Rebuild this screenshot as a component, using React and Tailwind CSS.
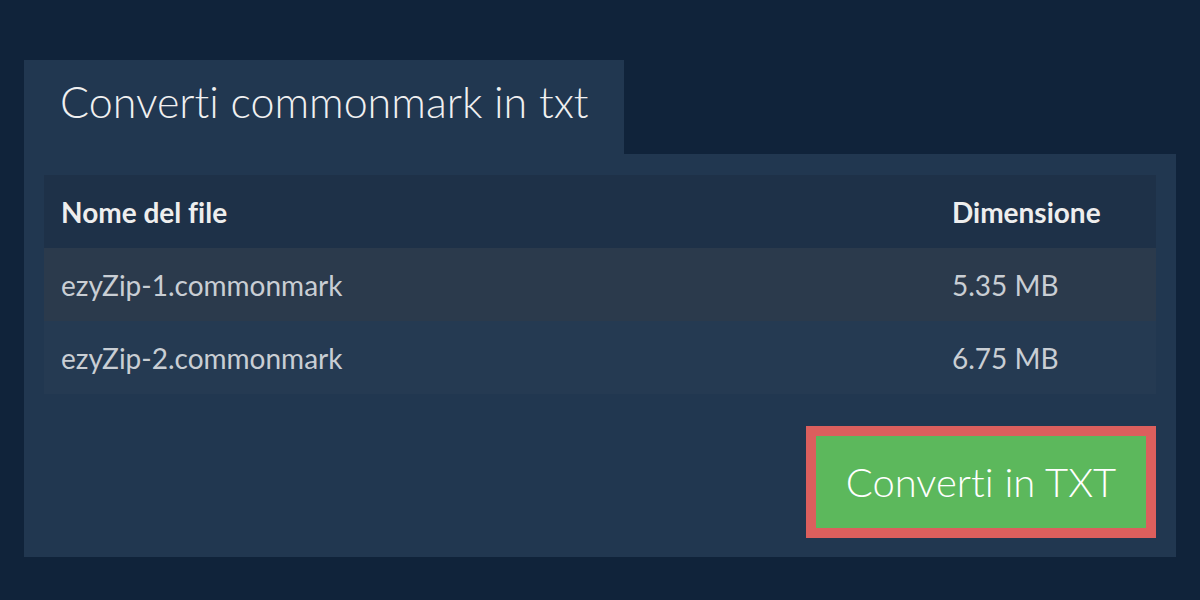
import React from 'react'

const files = [
  { name: 'ezyZip-1.commonmark', size: '5.35 MB' },
  { name: 'ezyZip-2.commonmark', size: '6.75 MB' },
]

const App = () => {
  return (
    <div className="w-[1200px] h-[600px] bg-[#10233a] pt-[60px] px-[24px] font-['Lato','Noto_Sans',sans-serif] [font-variant-ligatures:none]">
      <div className="w-[600px] h-[94px] bg-[#213750] pl-[36px] pt-[14px]">
        <h1 className="text-[43px] font-light text-[#f0f0f0] leading-[56px]">Converti commonmark in txt</h1>
      </div>
      <div className="bg-[#213750] px-[20px] pt-[21px] pb-[19px]">
        <div className="w-full">
          <div className="flex items-center h-[73px] bg-[#1e3148] text-[#eeeeee] text-[28px] font-bold">
            <div className="flex-1 pl-[17px]">Nome del file</div>
            <div className="w-[204px]">Dimensione</div>
          </div>
          {files.map((file, i) => (
            <div
              key={file.name}
              className={`flex items-center h-[73px] text-[28px] text-[#c9ced4] ${i === 0 ? 'bg-[#2b3a4c]' : 'bg-[#253a52]'}`}
            >
              <div className="flex-1 pl-[17px]">{file.name}</div>
              <div className="w-[204px]">{file.size}</div>
            </div>
          ))}
        </div>
        <div className="flex justify-end mt-[32px]">
          <button className="w-[350px] h-[112px] border-[10px] border-[#dc5f5d] bg-[#5cb85c] text-white text-[40px] font-light">
            Converti in TXT
          </button>
        </div>
      </div>
    </div>
  )
}

export default App
